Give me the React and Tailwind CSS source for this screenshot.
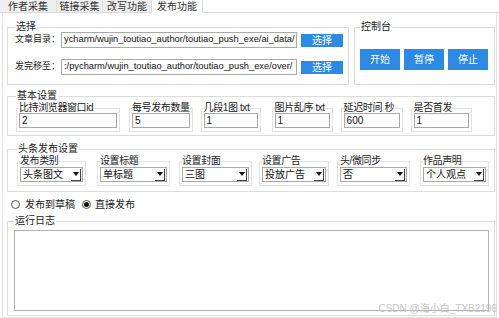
import React from 'react';

function Group({ label, className = '', children }) {
  return (
    <fieldset className={`border border-[#dcdcdc] ${className}`}>
      <legend className="whitespace-nowrap px-[1px] text-[10px] leading-[10px] text-[#222]">{label}</legend>
      {children}
    </fieldset>
  );
}

function SubGroup({ label, className = '', children }) {
  return (
    <fieldset className={`border border-[#e2e2e2] pl-[2px] pr-[2px] ${className}`}>
      <legend className="whitespace-nowrap text-[10px] leading-[10px] tracking-[-0.4px] text-[#222]">{label}</legend>
      {children}
    </fieldset>
  );
}

function Field({ value, className = 'h-[15px] text-[10px]' }) {
  return (
    <div className={`flex items-center overflow-hidden whitespace-nowrap border border-[#a9a9a9] bg-white px-[2px] text-[#111] ${className}`}>
      {value}
    </div>
  );
}

function Select({ value }) {
  return (
    <div className="mt-[1px] flex h-[15px] items-center border border-[#a9a9a9] bg-white pl-[2px] text-[10px] text-[#111]">
      <span className="whitespace-nowrap">{value}</span>
      <span className="ml-auto mr-[1px] flex h-[12px] w-[10px] items-center justify-center border-r border-b border-[#444]">
        <svg width="6" height="4" viewBox="0 0 6 4"><path d="M0 0h6L3 4z" fill="#111" /></svg>
      </span>
    </div>
  );
}

function Btn({ children, className = '' }) {
  return (
    <div className={`flex items-center justify-center bg-[#2d8ae4] text-[10px] text-white ${className}`}>{children}</div>
  );
}

const tabs = [
  { name: '作者采集', w: 'w-[57px]' },
  { name: '链接采集', w: 'w-[46px]' },
  { name: '改写功能', w: 'w-[49px]' },
];

export default function App() {
  return (
    <div className="relative flex h-[318px] w-[499px] flex-col overflow-hidden bg-white text-[#222] [font-family:'Liberation_Sans','Noto_Sans_CJK_SC',sans-serif]">
      <div className="flex h-[13px]">
        {tabs.map((t) => (
          <div key={t.name} className={`${t.w} flex items-center justify-center border-r border-b border-[#dadada] bg-[#efefef] text-[10px] leading-[13px] text-[#333]`}>
            {t.name}
          </div>
        ))}
        <div className="flex w-[51px] items-center justify-center border-r border-[#dadada] bg-white text-[10px] leading-[13px] text-[#333]">发布功能</div>
        <div className="flex-1 border-b border-[#dadada]" />
      </div>

      <div className="mx-[2px] flex flex-1 flex-col border-x border-b border-[#e4e4e4] pl-[4px] pr-[1px] pt-[9px]">
        <div className="flex gap-[5px]">
          <Group label="选择" className="w-[342px] pb-[9px] pl-[7px]">
            <div className="flex h-[16px] items-center">
              <span className="w-[46px] whitespace-nowrap text-[9px]">文章目录：</span>
              <Field value="ycharm/wujin_toutiao_author/toutiao_push_exe/ai_data/" className="h-[16px] w-[236px] text-[9.3px]" />
              <Btn className="ml-[4px] h-[13px] w-[42px]">选择</Btn>
            </div>
            <div className="mt-[11px] flex h-[16px] items-center">
              <span className="w-[46px] whitespace-nowrap text-[9px]">发完移至：</span>
              <Field value=":/pycharm/wujin_toutiao_author/toutiao_push_exe/over/" className="h-[16px] w-[236px] text-[9.3px]" />
              <Btn className="ml-[4px] h-[13px] w-[42px]">选择</Btn>
            </div>
          </Group>
          <Group label="控制台" className="flex-1 pl-[5px]">
            <div className="mt-[17px] flex gap-[4px]">
              <Btn className="h-[21px] w-[40px]">开始</Btn>
              <Btn className="h-[21px] w-[40px]">暂停</Btn>
              <Btn className="h-[21px] w-[40px]">停止</Btn>
            </div>
          </Group>
        </div>

        <Group label="基本设置" className="mt-[6px] pb-[3px] pl-[8px]">
          <div className="mt-[2px] flex">
            <SubGroup label="比持浏览器窗口id" className="w-[104px] pb-[3px]"><Field value="2" /></SubGroup>
            <SubGroup label="每号发布数量" className="ml-[9px] w-[62px] pb-[3px]"><Field value="5" /></SubGroup>
            <SubGroup label="几段1图 txt" className="ml-[8px] w-[60px] pb-[3px]"><Field value="1" /></SubGroup>
            <SubGroup label="图片乱序 txt" className="ml-[11px] w-[61px] pb-[3px]"><Field value="1" /></SubGroup>
            <SubGroup label="延迟时间 秒" className="ml-[8px] w-[62px] pb-[3px]"><Field value="600" /></SubGroup>
            <SubGroup label="是否首发" className="ml-[8px] w-[61px] pb-[3px]"><Field value="1" /></SubGroup>
          </div>
        </Group>

        <Group label="头条发布设置" className="mt-[8px] pb-[5px] pl-[9px]">
          <div className="mt-[2px] flex">
            <SubGroup label="发布类别" className="w-[69px] pb-[3px]"><Select value="头条图文" /></SubGroup>
            <SubGroup label="设置标题" className="ml-[11px] w-[73px] pb-[3px]"><Select value="单标题" /></SubGroup>
            <SubGroup label="设置封面" className="ml-[9px] w-[73px] pb-[3px]"><Select value="三图" /></SubGroup>
            <SubGroup label="设置广告" className="ml-[7px] w-[70px] pb-[3px]"><Select value="投放广告" /></SubGroup>
            <SubGroup label="头/微同步" className="ml-[8px] w-[73px] pb-[3px]"><Select value="否" /></SubGroup>
            <SubGroup label="作品声明" className="ml-[10px] w-[69px] pb-[3px]"><Select value="个人观点" /></SubGroup>
          </div>
        </Group>

        <div className="mt-[6px] flex h-[12px] items-center pl-[4px] text-[10px]">
          <span className="h-[9px] w-[9px] rounded-full border border-[#555] bg-white" />
          <span className="ml-[5px]">发布到草稿</span>
          <span className="ml-[7px] flex h-[9px] w-[9px] items-center justify-center rounded-full border border-[#555] bg-white">
            <span className="h-[5px] w-[5px] rounded-full bg-[#111]" />
          </span>
          <span className="ml-[4px]">直接发布</span>
        </div>

        <Group label="运行日志" className="mt-[6px] pb-[4px] pl-[6px] pr-[5px]">
          <div className="mt-[4px] h-[81px] border border-[#b4b4b4] bg-white" />
        </Group>
      </div>

      <div className="absolute bottom-[4px] right-[2px] text-[10px] leading-[10px] text-[#c4c4c4]">CSDN @海小白_TXB2196</div>
    </div>
  );
}
